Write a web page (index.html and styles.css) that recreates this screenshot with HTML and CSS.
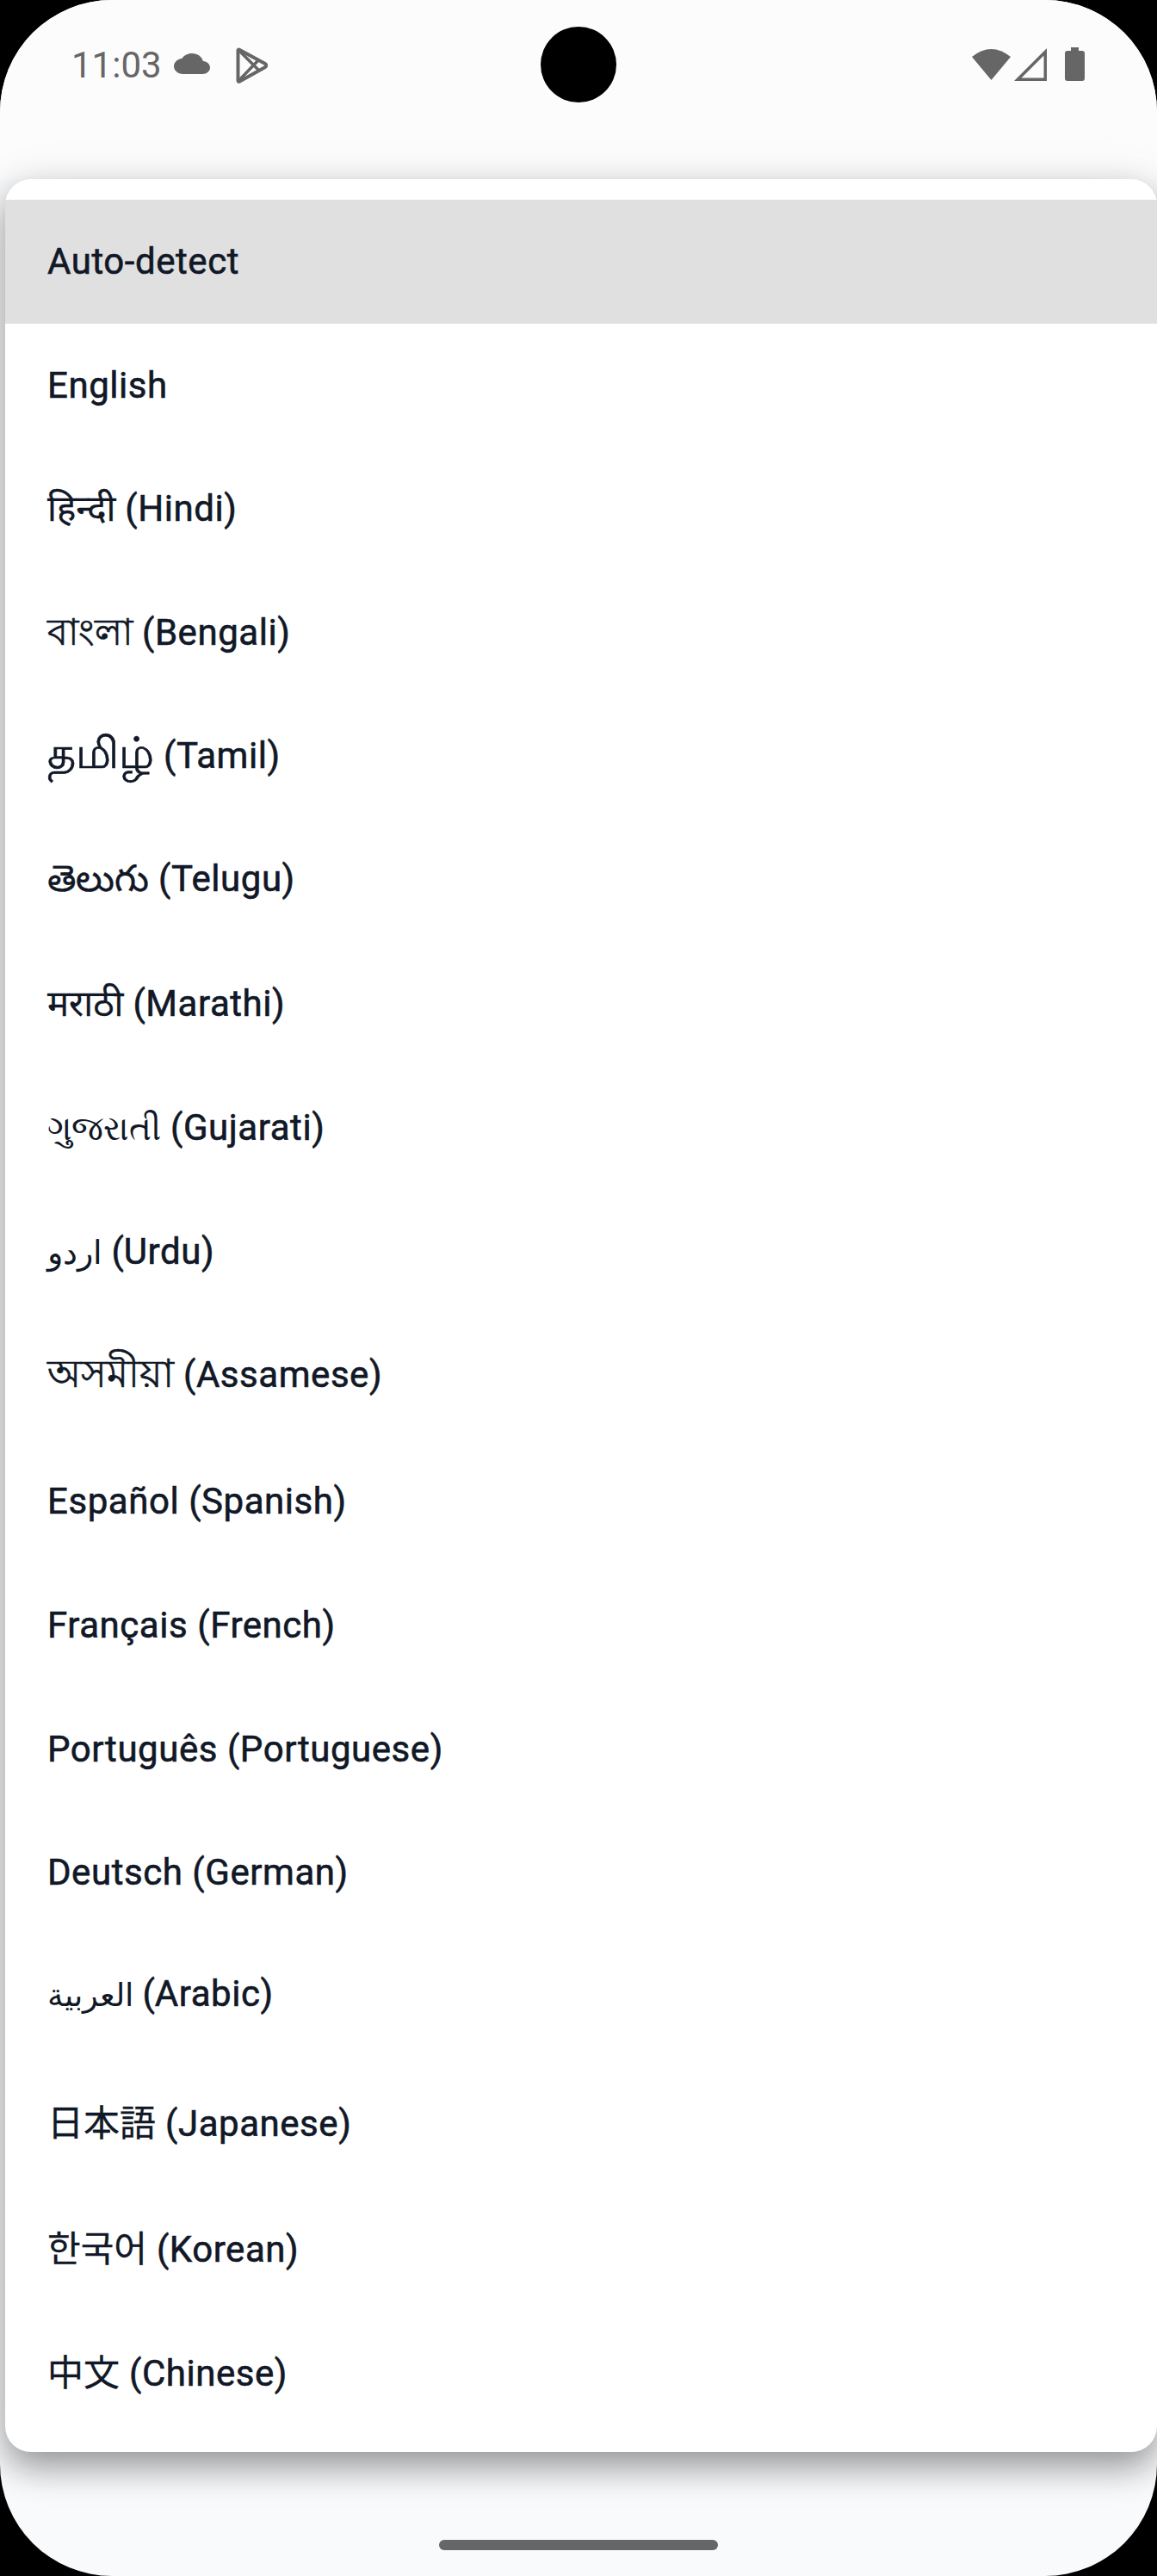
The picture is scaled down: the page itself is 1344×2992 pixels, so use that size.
FILE: index.html
```html
<!DOCTYPE html>
<html lang="en">
<head>
<meta charset="utf-8">
<title>Language picker</title>
<link rel="stylesheet" href="styles.css">
</head>
<body>
<div class="screen">
  <header class="status">
    <div class="status-left">
      <span class="time">11:03</span>
      <svg class="ic-cloud" viewBox="0 4 24 16" preserveAspectRatio="none"><path d="M19.35 10.04C18.67 6.59 15.64 4 12 4 9.11 4 6.6 5.64 5.35 8.04 2.34 8.36 0 10.91 0 14c0 3.31 2.69 6 6 6h13c2.76 0 5-2.24 5-5 0-2.64-2.05-4.78-4.65-4.96z"/></svg>
      <svg class="ic-play" viewBox="0 0 38 42"><path class="line" d="M3.500 3.500 Q3.500 2 5.500 3 L35 19 Q37.500 21 35 23 L5.500 39.500 Q3.500 40.500 3.500 38.500 Z"/><path class="line thin" d="M4 3 L28 27 M4 39 L28 14"/></svg>
    </div>
    <div class="status-right">
      <svg class="ic-wifi" viewBox="0 0 45 38"><path d="M0 11 Q22.500 -7 45 11 L22.500 38 Z"/></svg>
      <svg class="ic-signal" viewBox="0 0 38 38"><path fill-rule="evenodd" d="M38 0V38H0ZM34.500 8.500 8.500 34.500H34.500Z"/></svg>
      <svg class="ic-battery" viewBox="0 0 23 39"><path d="M7 0H16V4H20Q23 4 23 7V36Q23 39 20 39H3Q0 39 0 36V7Q0 4 3 4H7Z"/></svg>
    </div>
  </header>
  <div class="camera"></div>
  <ul class="panel">
    <li class="row selected">Auto-detect</li>
    <li class="row">English</li>
    <li class="row"><span class="nat deva">हिन्दी</span> (Hindi)</li>
    <li class="row"><span class="nat bn">বাংলা</span> (Bengali)</li>
    <li class="row row-ta"><span class="nat ta">தமிழ்</span> (Tamil)</li>
    <li class="row row-te"><span class="nat te">తెలుగు</span> (Telugu)</li>
    <li class="row"><span class="nat deva">मराठी</span> (Marathi)</li>
    <li class="row"><span class="nat gu">ગુજરાતી</span> (Gujarati)</li>
    <li class="row"><span class="nat ur">اردو</span> (Urdu)</li>
    <li class="row row-as"><span class="nat as">অসমীয়া</span> (Assamese)</li>
    <li class="row">Español (Spanish)</li>
    <li class="row">Français (French)</li>
    <li class="row">Português (Portuguese)</li>
    <li class="row row-de">Deutsch (German)</li>
    <li class="row row-ar"><span class="nat ar">العربية</span> (Arabic)</li>
    <li class="row row-ja"><span class="nat cjk">日本語</span> (Japanese)</li>
    <li class="row"><span class="nat cjk">한국어</span> (Korean)</li>
    <li class="row"><span class="nat cjk">中文</span> (Chinese)</li>
  </ul>
  <div class="home-bar"></div>
</div>
</body>
</html>
```

FILE: styles.css
```css
* { box-sizing: border-box; }
html, body { margin: 0; padding: 0; background: #000; }
body { width: 1344px; height: 2992px; overflow: hidden; }

.screen {
  position: relative;
  width: 1344px;
  height: 2992px;
  border-radius: 130px;
  overflow: hidden;
  background: #f8fafc;
  display: flex;
  flex-direction: column;
  font-family: Roboto, "Noto Sans", "Noto Sans CJK JP", sans-serif;
}

.status {
  height: 208px;
  flex: none;
  background: #fcfcfc;
  display: flex;
  justify-content: space-between;
  align-items: flex-start;
  padding: 55px 84px 0 83px;
}
.status-left, .status-right { display: flex; align-items: flex-start; }
.time { font-size: 42px; line-height: 40px; color: #666; margin-top: 1px; }
svg { display: block; fill: #666; }
.ic-cloud { width: 42px; height: 24px; margin: 7px 0 0 14px; }
.ic-play { width: 38px; height: 42px; margin: 0 0 0 29px; }
.line { fill: none; stroke: #666; stroke-width: 4; stroke-linejoin: round; }
.line.thin { stroke-width: 3.5; }
.ic-wifi { width: 45px; height: 38px; }
.ic-signal { width: 38px; height: 38px; margin: 1px 0 0 4px; }
.ic-battery { width: 23px; height: 39px; margin-left: 21px; }

.camera {
  position: absolute;
  left: 628px;
  top: 31px;
  width: 88px;
  height: 88px;
  border-radius: 50%;
  background: #000;
}

.panel {
  list-style: none;
  margin: 0 0 0 6px;
  padding: 24px 0 19px;
  background: #fff;
  border-radius: 30px;
  box-shadow: 0 18px 40px rgba(0, 0, 0, 0.38), 0 0 60px rgba(0, 0, 0, 0.06);
}
.row {
  height: 143.8px;
  padding: 47.5px 0 0 49px;
  font-size: 42px;
  line-height: 48px;
  font-weight: 400;
  letter-spacing: 0.55px;
  -webkit-text-stroke: 0.6px #111827;
  color: #111827;
}
.row.selected { height: 144px; background: #e0e0e0; }
.row-ta { padding-top: 46.5px; height: 143.3px; }
.row-te { padding-top: 46.5px; }
.row-as { height: 146.6px; }
.row-de { height: 141px; }
.row-ar { height: 150.8px; }
.row-ja { height: 146px; }

.nat { letter-spacing: 0; line-height: 0; }
.deva { -webkit-text-stroke: 0.3px #111827; }
.bn { font-size: 43px; -webkit-text-stroke: 0.6px #111827; }
.ta { font-size: 50.5px; -webkit-text-stroke: 0.6px #111827; }
.te { font-size: 43px; -webkit-text-stroke: 0.4px #111827; }
.gu { font-size: 39px; -webkit-text-stroke: 0; }
.ur { font-size: 38px; -webkit-text-stroke: 0; }
.ar { font-size: 37px; -webkit-text-stroke: 0; }
.as { font-size: 45px; -webkit-text-stroke: 0.6px #111827; }
.cjk { -webkit-text-stroke: 0.3px #111827; }

.home-bar {
  position: absolute;
  left: 510px;
  top: 2950px;
  width: 324px;
  height: 12px;
  border-radius: 6px;
  background: #666;
}
```
